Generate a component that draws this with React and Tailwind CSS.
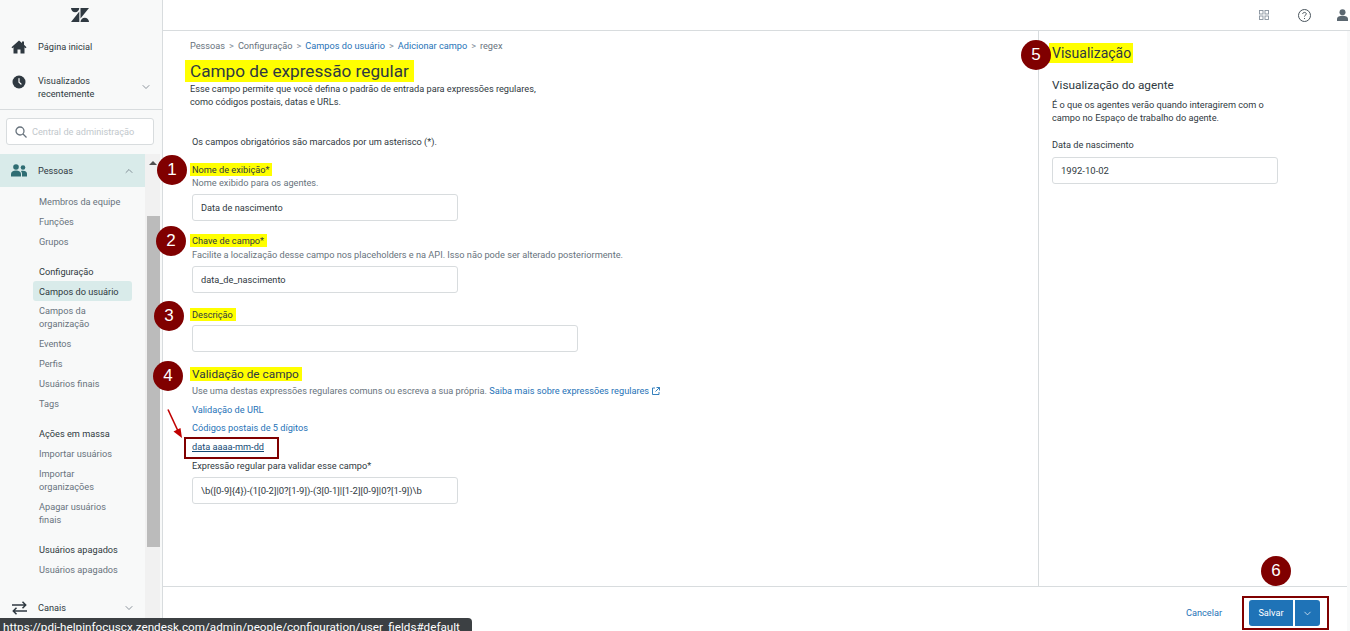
import { ChevronDown, ChevronUp } from 'lucide-react';

const FONT = 'font-["Roboto",sans-serif]';

const HomeIcon = () => (
    <svg width="16" height="16" viewBox="0 0 16 16" fill="#2f3941">
        <path d="M8 1.500 0.500 8.200l.9 1L2.500 8.300V14.500h4v-4h3v4h4V8.300l1.100.9.9-1L13 5.700V2.500h-2v1.400z" />
    </svg>
);

const ClockIcon = () => (
    <svg width="14" height="14" viewBox="0 0 14 14">
        <circle cx="7" cy="7" r="6.500" fill="#2f3941" />
        <path d="M7 3.500V7.300L9 9" fill="none" stroke="#fff" strokeWidth="1.200" strokeLinecap="round" />
    </svg>
);

const PeopleIcon = () => (
    <svg width="16" height="13" viewBox="0 0 16 13" fill="#2f6d73">
        <circle cx="5" cy="3" r="2.800" />
        <circle cx="12" cy="3.500" r="2.300" />
        <path d="M0 12.500V10c0-2 2-3.500 5-3.500s5 1.500 5 3.500v2.500zM11 12.500V9.800c0-1-.4-2-1.100-2.700.6-.2 1.300-.3 2.100-.3 2.300 0 4 1.200 4 3v2.700z" />
    </svg>
);

const SwapIcon = () => (
    <svg width="15" height="14" viewBox="0 0 15 14" fill="none" stroke="#2f3941" strokeWidth="1.500">
        <path d="M0 4h13.500M10.500 .8l3.200 3.200-3.200 3.200" />
        <path d="M15 10H1.500M4.500 6.800 1.300 10l3.200 3.200" />
    </svg>
);

const ZendeskLogo = () => (
    <svg width="18" height="14" viewBox="0 0 18 14" fill="#2f3941">
        <path d="M0 0h8.300A4.150 4.150 0 0 1 0 0z" />
        <path d="M9.500 0H18L9.500 10.500z" />
        <path d="M8.300 3.500V14H0z" />
        <path d="M9.500 14a4.250 4.250 0 0 1 8.500 0z" />
    </svg>
);

function SubItem({ label, active }) {
    return (
        <li className={`px-[6px] py-[3.5px] leading-[13px] rounded-[3px] ${active ? 'bg-[#d9ebea] text-[#2f3941] -mb-px' : 'text-[#68737d]'}`}>
            {label}
        </li>
    );
}

function SubGroup({ title, items, active, className = '' }) {
    return (
        <ul className={`ml-[33px] w-[99px] ${className}`}>
            {title && <li className="px-[6px] py-[3.5px] leading-[13px] text-[#2f3941]">{title}</li>}
            {items.map((item) => (
                <SubItem key={item} label={item} active={item === active} />
            ))}
        </ul>
    );
}

function Sidebar() {
    return (
        <aside className="flex flex-col w-[163px] h-full shrink-0 bg-[#f8f9f9] border-r border-[#d8dcde] text-[9.2px]">
            <div className="h-[30px] flex items-center pl-[71px]">
                <ZendeskLogo />
            </div>
            <div className="h-[34px] flex items-center text-[#2f3941]">
                <span className="w-[38px] flex justify-center"><HomeIcon /></span>
                <span>Página inicial</span>
            </div>
            <div className="h-[46px] flex items-center text-[#2f3941] border-b border-[#d8dcde]">
                <span className="w-[38px] flex justify-center pb-[9px]"><ClockIcon /></span>
                <span className="leading-[13px] w-[90px]">Visualizados recentemente</span>
                <ChevronDown size={12} strokeWidth={1.500} className="ml-auto mr-[10px] text-[#68737d]" />
            </div>
            <div className="pl-[6px] pr-[8px] pt-[8px]">
                <div className="h-[27px] flex items-center gap-[5px] pl-[8px] bg-white border border-[#d8dcde] rounded-[3px] text-[#c2c8cc]">
                    <svg width="12" height="12" viewBox="0 0 12 12" fill="none" stroke="#68737d" strokeWidth="1.300">
                        <circle cx="5" cy="5" r="4" />
                        <path d="M8 8l3.500 3.500" />
                    </svg>
                    <span>Central de administração</span>
                </div>
            </div>
            <div className="flex flex-1 mt-[9px] min-h-0">
                <div className="w-[145px]">
                    <div className="h-[33px] flex items-center bg-[#d9ebea] text-[#2f3941]">
                        <span className="w-[38px] flex justify-center"><PeopleIcon /></span>
                        <span>Pessoas</span>
                        <ChevronUp size={12} strokeWidth={1.500} className="ml-auto mr-[10px] text-[#68737d]" />
                    </div>
                    <SubGroup className="mt-[4px]" items={['Membros da equipe', 'Funções', 'Grupos']} />
                    <SubGroup
                        className="mt-[10px]"
                        title="Configuração"
                        active="Campos do usuário"
                        items={['Campos do usuário', 'Campos da organização', 'Eventos', 'Perfis', 'Usuários finais', 'Tags']}
                    />
                    <SubGroup
                        className="mt-[10px]"
                        title="Ações em massa"
                        items={['Importar usuários', 'Importar organizações', 'Apagar usuários finais']}
                    />
                    <SubGroup className="mt-[10px]" title="Usuários apagados" items={['Usuários apagados']} />
                    <div className="h-[34px] mt-[12px] flex items-center text-[#2f3941]">
                        <span className="w-[38px] flex justify-center"><SwapIcon /></span>
                        <span>Canais</span>
                        <ChevronDown size={12} strokeWidth={1.500} className="ml-auto mr-[10px] text-[#68737d]" />
                    </div>
                </div>
                <div className="w-[15px] bg-[#f1f1f1] flex flex-col items-end">
                    <div className="w-full flex justify-center pt-[7px]">
                        <div className="w-0 h-0 border-x-[4px] border-x-transparent border-b-[4px] border-b-[#505050]" />
                    </div>
                    <div className="w-[13px] h-[331px] mt-[51px] bg-[#bbbbbb]" />
                </div>
            </div>
        </aside>
    );
}

const Label = ({ children, className = '' }) => (
    <div className={`leading-[13px] text-[#2f3941] ${className}`}>{children}</div>
);

const Hint = ({ children, className = '' }) => (
    <div className={`leading-[13px] text-[#68737d] ${className}`}>{children}</div>
);

const Mark = ({ children, className = '' }) => (
    <span className={`inline-block bg-[#ffff00] ${className}`}>{children}</span>
);

// digits run narrower in Roboto, hence the size option
function Field({ value = '', width = 'w-[266px]', size = 'text-[9.2px]', className = '' }) {
    return (
        <input
            readOnly
            value={value}
            className={`block h-[27px] px-[8px] ${width} ${size} bg-white border border-[#d8dcde] rounded-[3px] text-[#2f3941] outline-none ${className}`}
        />
    );
}

function Crumbs() {
    const sep = <span className="mx-[4px] text-[#87929d]">&gt;</span>;
    return (
        <nav className="flex items-center leading-[13px] text-[#68737d]">
            <span>Pessoas</span>
            {sep}
            <span>Configuração</span>
            {sep}
            <a className="text-[#1f73b7]">Campos do usuário</a>
            {sep}
            <a className="text-[#1f73b7]">Adicionar campo</a>
            {sep}
            <span>regex</span>
        </nav>
    );
}

function FormColumn() {
    return (
        <section className="w-[876px] shrink-0 border-r border-[#d8dcde] pl-[27px] pt-[8px] text-[9.2px]">
            <Crumbs />
            <h1 className="mt-[8px] -ml-[5px] text-[17.2px] leading-[22px] text-[#2f3941]">
                <Mark className="px-[5px]">Campo de expressão regular</Mark>
            </h1>
            <p className="leading-[13px] text-[#2f3941] w-[355px]">
                Esse campo permite que você defina o padrão de entrada para expressões regulares, como códigos postais, datas e URLs.
            </p>

            <div className="pl-[2px]">
                <Label className="mt-[27px]">Os campos obrigatórios são marcados por um asterisco (*).</Label>

                <Label className="mt-[15px]"><Mark className="-ml-[2px] pl-[2px] pr-[3px]">Nome de exibição*</Mark></Label>
                <Hint>Nome exibido para os agentes.</Hint>
                <Field className="mt-[5px]" value="Data de nascimento" />

                <Label className="mt-[13px]"><Mark className="-ml-[2px] pl-[2px] pr-[3px]">Chave de campo*</Mark></Label>
                <Hint className="mt-px">Facilite a localização desse campo nos placeholders e na API. Isso não pode ser alterado posteriormente.</Hint>
                <Field className="mt-[5px]" value="data_de_nascimento" />

                <Label className="mt-[15px]"><Mark className="-ml-[2px] pl-[2px] pr-[3px]">Descrição</Mark></Label>
                <Field className="mt-[4px]" width="w-[386px]" />

                <h2 className="mt-[15px] text-[11.8px] leading-[14px] text-[#2f3941]">
                    <Mark className="-ml-[2px] pl-[2px] pr-[3px]">Validação de campo</Mark>
                </h2>
                <Hint className="mt-[3px] flex items-center">
                    Use uma destas expressões regulares comuns ou escreva a sua própria.&nbsp;
                    <a className="text-[#1f73b7]">Saiba mais sobre expressões regulares</a>
                    <svg className="ml-[3px]" width="8" height="8" viewBox="0 0 8 8" fill="none" stroke="#1f73b7" strokeWidth="0.900">
                        <path d="M3 1H.5v6.500H7V5M4.500.5h3v3M7.500.5 3.500 4.500" />
                    </svg>
                </Hint>
                <div className="mt-[6px] leading-[13px] text-[#1f73b7]">Validação de URL</div>
                <div className="mt-[5px] leading-[13px] text-[#1f73b7]">Códigos postais de 5 dígitos</div>
                <div className="mt-[6px] leading-[13px] text-[#144a75] underline">data aaaa-mm-dd</div>
                <Label className="mt-[6px]">Expressão regular para validar esse campo*</Label>
                <Field
                    className="mt-[5px]"
                    size="text-[9.5px]"
                    value="\b([0-9]{4})-(1[0-2]|0?[1-9])-(3[0-1]|[1-2][0-9]|0?[1-9])\b"
                />
            </div>
        </section>
    );
}

function PreviewColumn() {
    return (
        <section className="flex-1 pl-[13px] pt-[12px] text-[9.2px] text-[#2f3941]">
            <h2 className="-ml-[3px] text-[14px] leading-[20px]">
                <Mark className="pl-[3px] pr-[2px]">Visualização</Mark>
            </h2>
            <h3 className="mt-[15px] text-[11.8px] leading-[14px]">Visualização do agente</h3>
            <p className="mt-[6px] leading-[13px] w-[225px]">É o que os agentes verão quando interagirem com o campo no Espaço de trabalho do agente.</p>
            <Label className="mt-[14px]">Data de nascimento</Label>
            <Field className="mt-[6px]" width="w-[226px]" size="text-[9.5px]" value="1992-10-02" />
        </section>
    );
}

function Footer() {
    return (
        <footer className="h-[45px] shrink-0 flex items-center justify-end pr-[27px] pt-[8px] border-t border-[#d8dcde] text-[9.2px]">
            <a className="text-[#1f73b7] mr-[27px]">Cancelar</a>
            <button className="w-[44px] h-[26px] bg-[#1f73b7] text-white rounded-l-[3px]">Salvar</button>
            <button className="w-[25px] h-[26px] ml-[2px] flex items-center justify-center bg-[#1f73b7] text-white rounded-r-[3px]">
                <ChevronDown size={11} strokeWidth={1.500} />
            </button>
        </footer>
    );
}

const Badge = ({ n, className }) => (
    <div className={`absolute w-[30px] h-[30px] rounded-full bg-[#800000] text-white text-[17px] font-["Liberation_Sans",sans-serif] flex items-center justify-center ${className}`}>
        {n}
    </div>
);

export default function App() {
    return (
        <div className={`relative flex w-[1350px] h-[631px] overflow-hidden bg-white ${FONT}`}>
            <Sidebar />
            <main className="flex-1 flex flex-col min-w-0">
                <header className="h-[31px] shrink-0 flex items-center justify-end border-b border-[#d8dcde]">
                    <svg width="10" height="10" viewBox="0 0 10 10" fill="none" stroke="#87929d" strokeWidth="0.900">
                        <rect x=".5" y=".5" width="3.500" height="3.500" />
                        <rect x="6" y=".5" width="3.500" height="3.500" />
                        <rect x=".5" y="6" width="3.500" height="3.500" />
                        <rect x="6" y="6" width="3.500" height="3.500" />
                    </svg>
                    <svg className="ml-[29px]" width="13" height="13" viewBox="0 0 13 13" fill="none" stroke="#49545c">
                        <circle cx="6.500" cy="6.500" r="6" />
                        <path d="M4.700 5c0-1 .8-1.600 1.800-1.600s1.800.6 1.800 1.500c0 1.200-1.800 1.300-1.800 2.600" />
                        <path d="M6.500 9v1" />
                    </svg>
                    <svg className="ml-[26px] mr-[2px]" width="11" height="12" viewBox="0 0 11 12" fill="#5b6770">
                        <circle cx="5.500" cy="3.200" r="3" />
                        <path d="M0 12V10c0-2 2.500-3.200 5.500-3.200S11 8 11 10v2z" />
                    </svg>
                </header>
                <div className="flex-1 flex min-h-0">
                    <div className="flex-1 flex flex-col min-w-0">
                        <div className="flex-1 flex min-h-0">
                            <FormColumn />
                            <PreviewColumn />
                        </div>
                        <Footer />
                    </div>
                    <div className="w-[3px] bg-[#f8f9f9]" />
                </div>
            </main>

            {/* annotations drawn over the screenshot */}
            <Badge n="1" className="left-[157px] top-[155px]" />
            <Badge n="2" className="left-[156px] top-[226px]" />
            <Badge n="3" className="left-[154px] top-[301px]" />
            <Badge n="4" className="left-[153px] top-[361px]" />
            <Badge n="5" className="left-[1021px] top-[40px]" />
            <Badge n="6" className="left-[1261px] top-[556px]" />
            <div className="absolute left-[184px] top-[437px] w-[95px] h-[22px] border-2 border-[#800000]" />
            <div className="absolute left-[1242px] top-[596px] w-[87px] h-[34px] border-2 border-[#800000]" />
            <svg className="absolute left-[164px] top-[406px]" width="20" height="34" viewBox="0 0 20 34" fill="#c00000">
                <path d="M4 3.500 14 25" stroke="#c00000" strokeWidth="1.600" />
                <path d="M18 32 9.500 25.500l7-3.500z" />
            </svg>

            {/* browser status tooltip */}
            <div className="absolute left-0 bottom-0 w-[472px] h-[13px] overflow-hidden pl-[3px] bg-[#3c4043] rounded-tr-[4px] text-white text-[11.7px] leading-[18px] whitespace-nowrap">
                https://pdi-helpinfocuscx.zendesk.com/admin/people/configuration/user_fields#default
            </div>
        </div>
    );
}
